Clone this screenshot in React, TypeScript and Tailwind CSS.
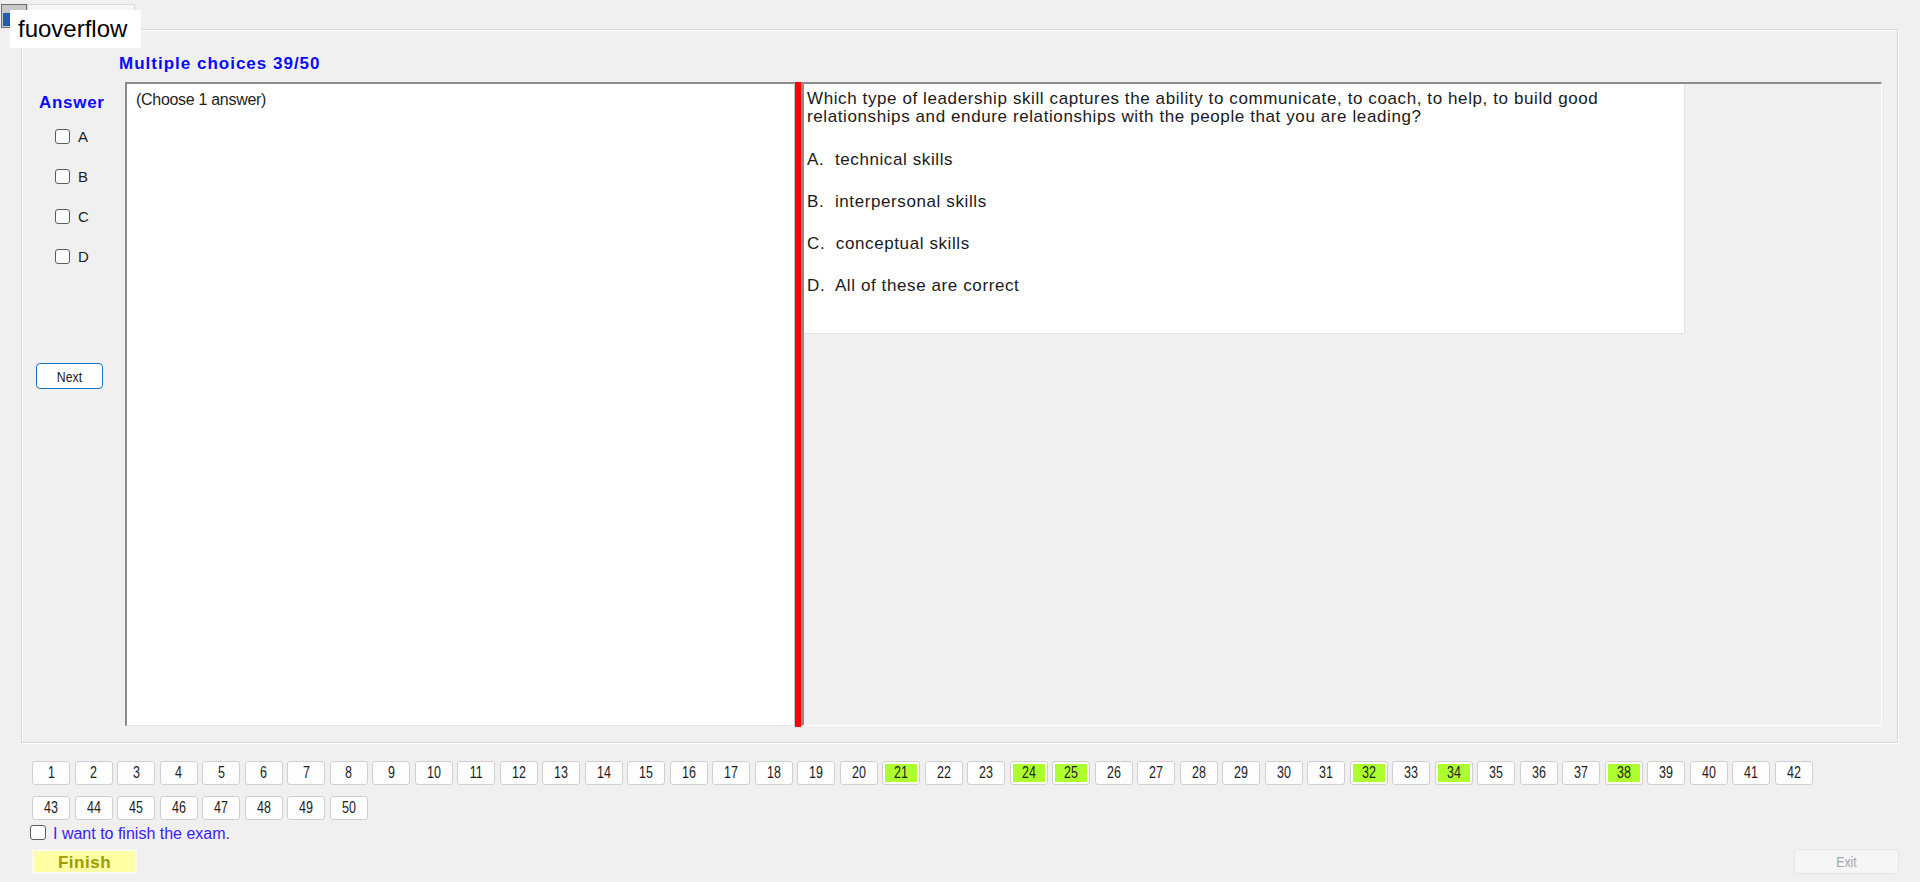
import React from "react";

const done = [21, 24, 25, 32, 34, 38];

function NavButton({ n }: { n: number }) {
  const green = done.includes(n);
  return (
    <div className="w-[38px] h-[24px] rounded-[3px] border border-[#d0d0d0] bg-[#fdfdfd] p-[2px] flex">
      <div
        className={
          "flex-1 flex items-center justify-center text-[16px] leading-none text-[#1e1e1e] " +
          (green ? "bg-[#adff2f]" : "")
        }
      >
        <span className="inline-block scale-x-[0.78]">{n}</span>
      </div>
    </div>
  );
}

function Check({ label }: { label: string }) {
  return (
    <div className="h-[16px] flex items-center gap-[8px]">
      <div className="w-[15px] h-[15px] rounded-[3px] border border-[#5c5c5c] bg-white" />
      <span className="text-[15px] leading-none text-[#1e1e1e]">{label}</span>
    </div>
  );
}

export default function App() {
  const nums = Array.from({ length: 50 }, (_, i) => i + 1);
  return (
    <div className="relative w-[1920px] h-[882px] overflow-hidden bg-[#f0f0f0] font-['Liberation_Sans',Arial,sans-serif] text-[#1e1e1e]">
      {/* group box */}
      <div className="ml-[21px] mt-[29px] w-[1877px] h-[714px] border border-[#d9d9d9] shadow-[1px_1px_0_#ffffff,inset_1px_1px_0_#ffffff] flex flex-col">
        <div className="ml-[97px] mt-[25px] h-[18px] leading-[18px] text-[17px] font-bold tracking-[1px] text-[#0a0aff]">
          Multiple choices 39/50
        </div>
        <div className="mt-[9px] flex h-[644px]">
          {/* left column */}
          <div className="w-[103px] flex flex-col">
            <div className="ml-[17px] mt-[12px] h-[18px] leading-[18px] text-[17px] font-bold tracking-[0.7px] text-[#0a0aff]">
              Answer
            </div>
            <div className="mt-[16px] ml-[33px] flex flex-col gap-[24px]">
              <Check label="A" />
              <Check label="B" />
              <Check label="C" />
              <Check label="D" />
            </div>
            <div className="mt-[99px] ml-[14px] w-[67px] h-[26px] rounded-[4px] border-[1.5px] border-[#1a73c8] bg-white flex items-center justify-center text-[15px] leading-none">
              <span className="inline-block scale-x-[0.82]">Next</span>
            </div>
          </div>
          {/* inner panel */}
          <div className="flex h-full w-[1757px]">
            <div className="w-[670px] h-full bg-white border-t-2 border-l-2 border-[#8a8a8a] border-r border-r-[#c4c4c4] border-b border-b-[#e3e3e3] pl-[9px] pt-[7px]">
              <div className="text-[16px] leading-[17px] tracking-[-0.3px]">(Choose 1 answer)</div>
            </div>
            <div className="w-[6px] h-[645px] bg-[#ff0000]" />
            <div className="flex-1 h-full border-t-2 border-l-[3px] border-[#8c8c8c] border-r border-b border-r-white border-b-white bg-[#f0f0f0]">
              <div className="w-[881px] h-[250px] bg-white border-r border-b border-[#e3e3e3] px-[3px] pt-[6px] text-[17px] leading-[18px] tracking-[0.6px] text-[#1a1a1a]">
                <div className="whitespace-nowrap">
                  Which type of leadership skill captures the ability to communicate, to coach, to help, to build good
                  <br />
                  relationships and endure relationships with the people that you are leading?
                </div>
                <div className="mt-[25px] whitespace-pre">A.  technical skills</div>
                <div className="mt-[24px] whitespace-pre">B.  interpersonal skills</div>
                <div className="mt-[24px] whitespace-pre">C.  conceptual skills</div>
                <div className="mt-[24px] whitespace-pre">D.  All of these are correct</div>
              </div>
            </div>
          </div>
        </div>
      </div>

      {/* navigation */}
      <div className="ml-[32px] mt-[18px] w-[1782px] flex flex-wrap gap-x-[4.5px] gap-y-[11px]">
        {nums.map((n) => (
          <NavButton key={n} n={n} />
        ))}
      </div>

      <div className="ml-[30px] mt-[3px] h-[18px] flex items-center gap-[7px]">
        <div className="w-[16px] h-[15px] rounded-[3px] border border-[#5c5c5c] bg-white" />
        <span className="pt-[3px] text-[16px] leading-none text-[#3a22f5]">I want to finish the exam.</span>
      </div>

      <div className="mt-[8px] flex justify-between pl-[32px] pr-[21px]">
        <div className="w-[105px] h-[25px] pt-[2px] border-2 border-[#f8f8f8] bg-[#ffffa6] flex items-center justify-center text-[17px] font-bold tracking-[0.5px] text-[#9c9c00]">
          Finish
        </div>
        <div className="w-[105px] h-[25px] rounded-[4px] border border-[#e4e4e4] bg-[#f6f6f6] flex items-center justify-center text-[15px] leading-none text-[#a6a6a6]">
          <span className="inline-block scale-x-[0.82]">Exit</span>
        </div>
      </div>

      {/* top-left overlay */}
      <div className="absolute left-[27px] top-[4px] w-[108px] h-[26px] border border-[#d8d8d8] bg-[#f7f7f7]" />
      <svg className="absolute left-[1px] top-[4px]" width="26" height="24" viewBox="0 0 26 24">
        <rect x="0.5" y="0.5" width="25" height="23" fill="#c8c8c8" stroke="#707070" />
        <rect x="2" y="9" width="7" height="13" fill="#1f5fa8" />
        <rect x="2" y="17" width="20" height="5" fill="#1f5fa8" />
      </svg>
      <div className="absolute left-[10px] top-[10px] w-[131px] h-[38px] bg-white flex items-center pl-[8px] text-[24px] leading-none text-black">
        fuoverflow
      </div>
    </div>
  );
}
